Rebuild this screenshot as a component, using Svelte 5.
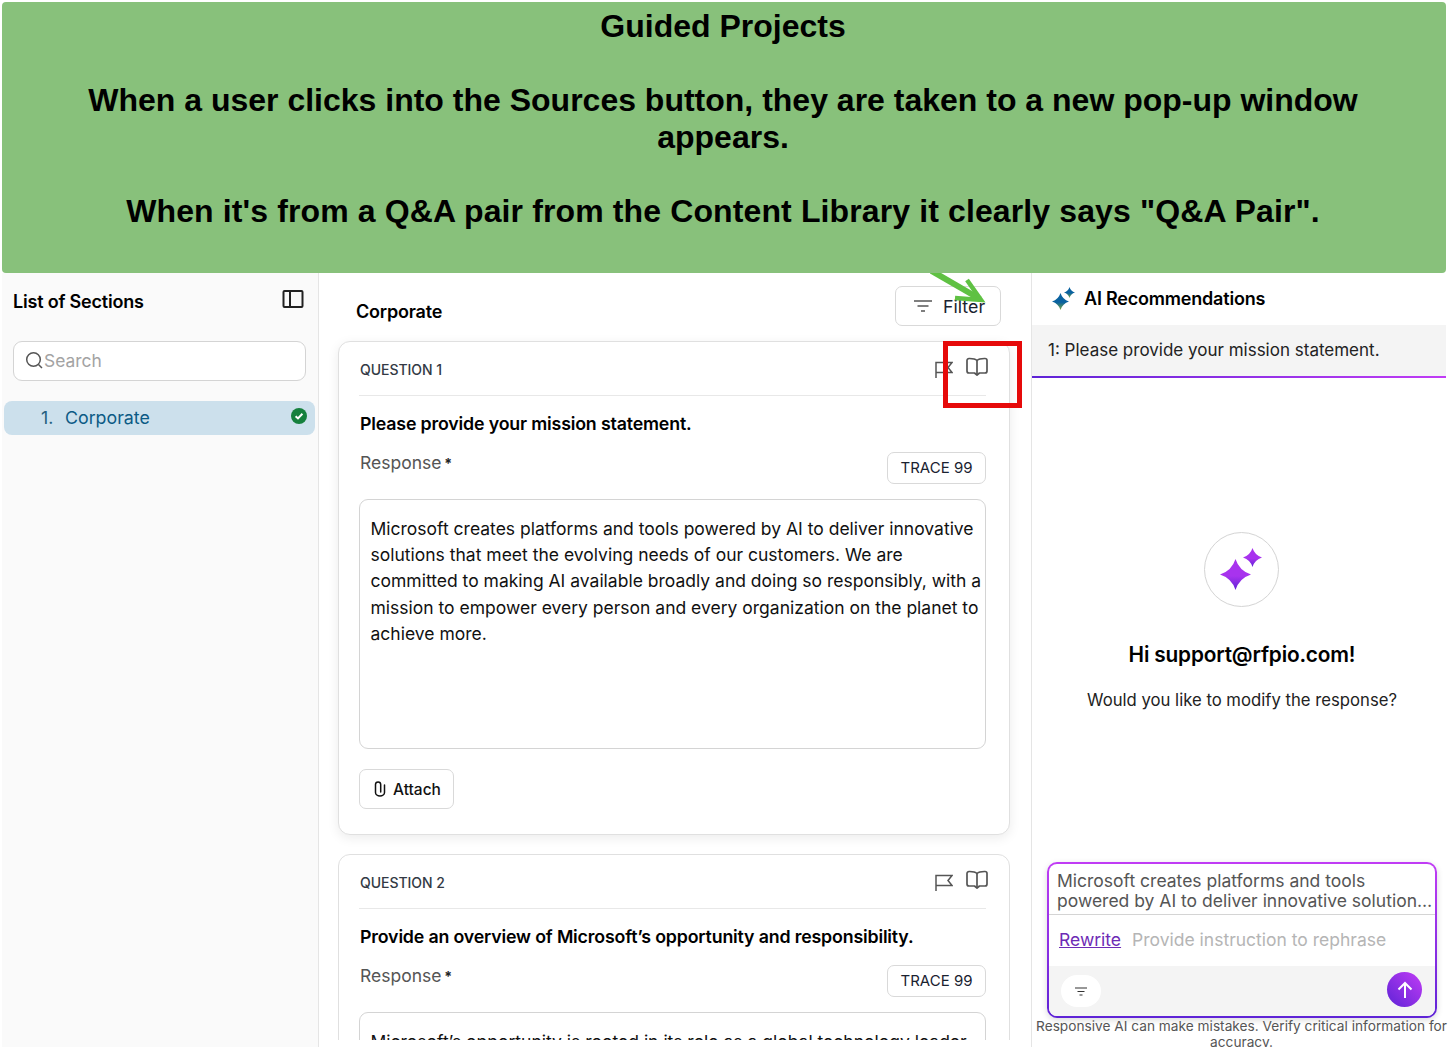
<script>
	const answer1 =
		"Microsoft creates platforms and tools powered by AI to deliver innovative solutions that meet the evolving needs of our customers. We are committed to making AI available broadly and doing so responsibly, with a mission to empower every person and every organization on the planet to achieve more.";
	const answer2 =
		"Microsoft’s opportunity is rooted in its role as a global technology leader";

	const questions = [
		{ label: "QUESTION 1", title: "Please provide your mission statement.", text: answer1, full: true },
		{ label: "QUESTION 2", title: "Provide an overview of Microsoft’s opportunity and responsibility.", text: answer2, full: false }
	];

	// four pointed star with concave sides
	function star(cx, cy, r) {
		const k = r * 0.24;
		return `M${cx} ${cy - r}Q${cx + k} ${cy - k} ${cx + r} ${cy}Q${cx + k} ${cy + k} ${cx} ${cy + r}Q${cx - k} ${cy + k} ${cx - r} ${cy}Q${cx - k} ${cy - k} ${cx} ${cy - r}Z`;
	}
</script>

{#snippet gradient(id, from, to)}
	<defs>
		<linearGradient {id} x1="0" y1="0" x2="0" y2="1">
			<stop offset="0" stop-color={from} />
			<stop offset="0.55" stop-color={from} />
			<stop offset="1" stop-color={to} />
		</linearGradient>
	</defs>
{/snippet}

<div class="page">
	<header class="banner">
		<p>Guided Projects</p>
		<p class="blank">&nbsp;</p>
		<p>When a user clicks into the Sources button, they are taken to a new pop-up window appears.</p>
		<p class="blank">&nbsp;</p>
		<p class="last">When it's from a Q&amp;A pair from the Content Library it clearly says "Q&amp;A Pair".</p>
	</header>

	<div class="columns">
		<aside class="sidebar">
			<div class="side-head">
				<h2>List of Sections</h2>
				<svg width="22" height="20" viewBox="0 0 22 20" fill="none" stroke="#222" stroke-width="2">
					<rect x="1.5" y="2" width="19" height="16" rx="1" />
					<path d="M8 2v16" />
				</svg>
			</div>
			<div class="search">
				<svg width="19" height="19" viewBox="0 0 19 19" fill="none" stroke="#555" stroke-width="1.5">
					<circle cx="8.5" cy="8.5" r="6.8" />
					<path d="M13.5 13.5 17 17" />
				</svg>
				<span>Search</span>
			</div>
			<div class="section-row">
				<span class="num">1.</span>
				<span class="name">Corporate</span>
				<svg class="check" width="16" height="16" viewBox="0 0 16 16">
					<circle cx="8" cy="8" r="8" fill="#15803d" />
					<path d="M4.6 8.2 7 10.4l4.4-4.6" fill="none" stroke="#fff" stroke-width="2" />
				</svg>
			</div>
		</aside>

		<main class="main">
			<div class="main-clip">
				<div class="main-head">
					<h2>Corporate</h2>
					<button class="filter">
						<svg width="18" height="12" viewBox="0 0 18 12" fill="none" stroke="#555" stroke-width="1.4">
							<path d="M0 1h18M3.5 6h11M7 11h4" />
						</svg>
						<span>Filter</span>
					</button>
				</div>

				{#each questions as q}
					<section class="card" class:full={q.full}>
						<div class="card-head">
							<span class="label">{q.label}</span>
							<div class="card-icons">
								<svg class="flag" width="18" height="18" viewBox="0 0 18 18" fill="none" stroke="#555" stroke-width="1.5">
									<path d="M1 17V1.500h16l-4 5 4 5H1" />
								</svg>
								<svg width="22" height="20" viewBox="0 0 22 20" fill="none" stroke="#555" stroke-width="1.7" stroke-linejoin="round">
									<path d="M11 3.500C9.500 2 7 1.500 3.500 1.500H3a2 2 0 0 0-2 2v10.500a2 2 0 0 0 2 2h5.500l2.500 2 2.500-2H19a2 2 0 0 0 2-2V3.500a2 2 0 0 0-2-2h-.5C15 1.500 12.500 2 11 3.500Z" />
									<path d="M11 3.500V17" />
								</svg>
							</div>
						</div>
						<h3>{q.title}</h3>
						<div class="response-row">
							<span class="response">Response <b>*</b></span>
							<button class="trace">TRACE 99</button>
						</div>
						<div class="answer">{q.text}</div>
						{#if q.full}
							<button class="attach">
								<svg width="12" height="16" viewBox="0 0 12 16" fill="none" stroke="#111" stroke-width="1.500" stroke-linecap="round">
									<path d="M10.500 4v7.500a4.500 3.500 0 0 1-9 0V3.500a2.600 2.600 0 0 1 5.200 0V11" />
								</svg>
								<span>Attach</span>
							</button>
						{/if}
					</section>
				{/each}
			</div>
		</main>

		<aside class="ai">
			<div class="ai-head">
				<svg width="24" height="24" viewBox="0 0 24 24">
					{@render gradient("sparkTeal", "#0a62a0", "#7aa83f")}
					<path fill="url(#sparkTeal)" d={star(8.5, 14.5, 8.5)} />
					<path fill="url(#sparkTeal)" d={star(17.5, 5.5, 5.5)} />
				</svg>
				<h2>AI Recommendations</h2>
			</div>
			<div class="ai-question">1: Please provide your mission statement.</div>

			<div class="ai-body">
				<div class="ai-circle">
					<svg width="46" height="46" viewBox="0 0 46 46">
						{@render gradient("sparkPurple", "#a833ee", "#5e23d6")}
						<path fill="url(#sparkPurple)" d={star(16.5, 27.5, 15.5)} />
						<path fill="url(#sparkPurple)" d={star(33.5, 10.5, 9.5)} />
					</svg>
				</div>
				<h3>Hi support@rfpio.com!</h3>
				<p>Would you like to modify the response?</p>
			</div>

			<div class="composer">
				<div class="composer-inner">
					<div class="quote">
						<div>Microsoft creates platforms and tools</div>
						<div class="clamp">powered by AI to deliver innovative solutions that meet the evolving needs</div>
					</div>
					<div class="instruction">
						<a href="#rewrite">Rewrite</a>
						<span>Provide instruction to rephrase</span>
					</div>
					<div class="composer-foot">
						<div class="pill">
							<svg width="12" height="9" viewBox="0 0 12 9" fill="none" stroke="#333" stroke-width="1.200">
								<path d="M0 1h12M2.500 4.500h7M4.500 8h3" />
							</svg>
						</div>
						<div class="send">
							<svg width="18" height="18" viewBox="0 0 18 18" fill="none" stroke="#fff" stroke-width="2">
								<path d="M9 17V2M2.500 8.500 9 2l6.500 6.500" />
							</svg>
						</div>
					</div>
				</div>
			</div>
			<div class="disclaimer">Responsive AI can make mistakes. Verify critical information for accuracy.</div>
		</aside>
	</div>

	<!-- annotations sitting over the screenshot -->
	<div class="red-box"></div>
	<svg class="arrow" width="60" height="36" viewBox="0 0 60 36" fill="none" stroke="#5fc143">
		<path d="M0-3 50 26" stroke-width="6" />
		<path d="M37 7 51 27 25 25" stroke-width="4.500" />
	</svg>
</div>

<style>
	:global(body) {
		margin: 0;
		background: #fff;
	}
	.page {
		position: relative;
		width: 1448px;
		height: 1047px;
		overflow: hidden;
		font-family: Inter, "Liberation Sans", sans-serif;
		color: #111;
	}
	.banner {
		box-sizing: border-box;
		margin: 2px 2px 0;
		height: 271px;
		padding: 6px 62px 0 60px;
		background: #88c17b;
		border-radius: 4px;
		text-align: center;
		font-family: "Liberation Sans", Arial, sans-serif;
		font-weight: 700;
		font-size: 32px;
		line-height: 37px;
		color: #000;
	}
	.banner p {
		margin: 0;
	}
	.banner .last {
		letter-spacing: 0.12px;
	}
	.columns {
		display: grid;
		grid-template-columns: 319px 713px 416px;
		height: 774px;
	}
	.sidebar {
		box-sizing: border-box;
		background: #fafafa;
		border-right: 1px solid #e5e5e5;
		padding: 0 3px 0 2px;
		margin-left: 2px;
	}
	.side-head {
		display: flex;
		justify-content: space-between;
		align-items: flex-start;
		padding: 17px 11px 0 9px;
		height: 68px;
		box-sizing: border-box;
	}
	.side-head svg {
		margin-top: -1px;
	}
	h2 {
		margin: 0;
		font-size: 18px;
		font-weight: 600;
		line-height: 24px;
		letter-spacing: -0.2px;
		color: #000;
	}
	.search {
		display: flex;
		align-items: center;
		box-sizing: border-box;
		width: 293px;
		height: 40px;
		margin-left: 9px;
		padding: 0 0 1px 11px;
		background: #fff;
		border: 1px solid #d4d4d4;
		border-radius: 9px;
		font-size: 17.4px;
		color: #a3a3a3;
	}
	.section-row {
		display: flex;
		align-items: center;
		position: relative;
		box-sizing: border-box;
		height: 34px;
		padding-bottom: 2px;
		margin-top: 20px;
		width: 311px;
		background: #cce0ec;
		border-radius: 8px;
		font-size: 17.800px;
		color: #0b5a85;
	}
	.num {
		margin-left: 37px;
		width: 24px;
		color: #26607f;
	}
	.check {
		position: absolute;
		right: 8px;
		top: 7px;
	}
	.main {
		border-right: 1px solid #e5e5e5;
		background: #fff;
	}
	.main-clip {
		box-sizing: border-box;
		height: 767px;
		padding: 0 21px 0 19px;
		overflow: hidden;
	}
	.main-head {
		display: flex;
		justify-content: space-between;
		height: 68px;
		padding: 13px 9px 0 18px;
		box-sizing: border-box;
	}
	.main-head h2 {
		margin-top: 14px;
	}
	.filter {
		display: flex;
		align-items: center;
		gap: 11px;
		box-sizing: border-box;
		width: 106px;
		height: 40px;
		padding: 0 0 0 18px;
		background: #fff;
		border: 1px solid #d9d9d9;
		border-radius: 7px;
		font: 400 17.800px Inter, sans-serif;
		color: #1a2230;
	}
	.card {
		box-sizing: border-box;
		background: #fff;
		border: 1px solid #e0e0e0;
		border-radius: 12px;
		padding: 0 23px 0 20px;
		margin-bottom: 19px;
	}
	.card.full {
		height: 494px;
		box-shadow: 0 3px 12px rgba(0, 0, 0, 0.08);
	}
	.card-head {
		display: flex;
		justify-content: space-between;
		align-items: center;
		height: 53px;
		border-bottom: 1px solid #e8e8e8;
	}
	.label {
		margin: 2px 0 0 1px;
		font-size: 14px;
		font-weight: 500;
		letter-spacing: -0.05px;
		color: #333a45;
	}
	.card-icons {
		display: flex;
		align-items: center;
		gap: 13px;
		margin-top: -3px;
		margin-right: -2px;
	}
	.flag {
		margin-top: 5px;
	}
	h3 {
		margin: 0;
		font-size: 17.800px;
		font-weight: 600;
		line-height: 24px;
		letter-spacing: -0.17px;
		color: #000;
	}
	.card h3 {
		margin: 16px 0 0 1px;
	}
	.response-row {
		display: flex;
		justify-content: space-between;
		align-items: flex-start;
		margin-top: 16px;
	}
	.response {
		margin: -1px 0 0 1px;
		font-size: 17.500px;
		line-height: 24px;
		color: #555;
	}
	.response b {
		margin-left: -2px;
		font-size: 14px;
		color: #222;
	}
	.trace {
		box-sizing: border-box;
		width: 99px;
		height: 32px;
		padding: 0 0 1px;
		background: #fff;
		border: 1px solid #d9d9d9;
		border-radius: 7px;
		font: 400 15px Inter, sans-serif;
		color: #1a2230;
	}
	.answer {
		box-sizing: border-box;
		height: 250px;
		margin-top: 15px;
		padding: 16px 3px 0 10.5px;
		border: 1px solid #d4d4d4;
		border-radius: 9px;
		font-size: 17.500px;
		line-height: 26.200px;
		color: #111;
	}
	.attach {
		display: flex;
		align-items: center;
		gap: 7px;
		box-sizing: border-box;
		width: 95px;
		height: 40px;
		margin-top: 20px;
		padding: 0 0 0 14px;
		background: #fff;
		border: 1px solid #d9d9d9;
		border-radius: 7px;
		font: 500 15.500px Inter, sans-serif;
		color: #111;
	}
	.ai {
		display: flex;
		flex-direction: column;
		background: #fff;
		overflow: hidden;
	}
	.ai > * {
		flex: none;
	}
	.ai-head {
		display: flex;
		align-items: center;
		gap: 8px;
		height: 52px;
		padding: 0 0 0 20px;
		box-sizing: border-box;
	}
	.ai-question {
		box-sizing: border-box;
		height: 53px;
		padding: 14px 0 0 16px;
		margin-right: 2px;
		background: #f4f4f4;
		border-bottom: 2px solid;
		border-image: linear-gradient(90deg, #5e23d6, #c13cf5) 1;
		font-size: 17px;
		line-height: 22px;
		color: #222;
	}
	.ai-body {
		height: 484px;
		display: flex;
		flex-direction: column;
		align-items: center;
		padding-left: 4px;
	}
	.ai-circle {
		display: flex;
		align-items: center;
		justify-content: center;
		box-sizing: border-box;
		width: 75px;
		height: 75px;
		margin: 154px 1px 0 0;
		border: 1px solid #d4d4d4;
		border-radius: 50%;
	}
	.ai-body h3 {
		margin-top: 34px;
		font-size: 20.800px;
		line-height: 28px;
	}
	.ai-body p {
		margin: 19px 0 0;
		font-size: 16.700px;
		line-height: 24px;
		color: #222;
	}
	.composer {
		box-sizing: border-box;
		width: 390px;
		height: 156px;
		margin-left: 15px;
		padding: 2px;
		border-radius: 10px;
		background: linear-gradient(180deg, #c13cf5, #5e23d6);
		box-shadow: 0 2px 6px rgba(0, 0, 0, 0.15);
	}
	.composer-inner {
		display: flex;
		flex-direction: column;
		height: 100%;
		background: #fff;
		border-radius: 8px;
		overflow: hidden;
	}
	.quote {
		box-sizing: border-box;
		height: 51px;
		padding: 7px 2px 0 8px;
		border-bottom: 1px solid #d4d4d4;
		font-size: 17.500px;
		line-height: 20px;
		color: #555;
	}
	.clamp {
		overflow: hidden;
		white-space: nowrap;
		text-overflow: ellipsis;
	}
	.instruction {
		display: flex;
		gap: 11px;
		height: 51px;
		padding: 13px 0 0 10px;
		box-sizing: border-box;
		font-size: 17.500px;
		line-height: 24px;
		color: #b5b5b5;
	}
	.instruction a {
		color: #6d2bb5;
	}
	.composer-foot {
		flex: 1;
		display: flex;
		justify-content: space-between;
		align-items: center;
		padding: 0 13px 0 12px;
		background: #f4f4f4;
	}
	.pill {
		display: flex;
		align-items: center;
		justify-content: center;
		width: 40px;
		height: 32px;
		background: #fff;
		border-radius: 16px;
	}
	.send {
		display: flex;
		align-items: center;
		justify-content: center;
		width: 35px;
		height: 35px;
		margin-bottom: 3px;
		border-radius: 50%;
		background: linear-gradient(45deg, #5e23d6, #c13cf5);
	}
	.disclaimer {
		padding-left: 3px;
		text-align: center;
		font-size: 13.700px;
		line-height: 16px;
		color: #555;
	}
	.red-box {
		position: absolute;
		left: 943px;
		top: 341px;
		width: 79px;
		height: 67px;
		box-sizing: border-box;
		border: 5px solid #e60a0a;
	}
	.arrow {
		position: absolute;
		left: 930px;
		top: 273px;
	}
</style>
